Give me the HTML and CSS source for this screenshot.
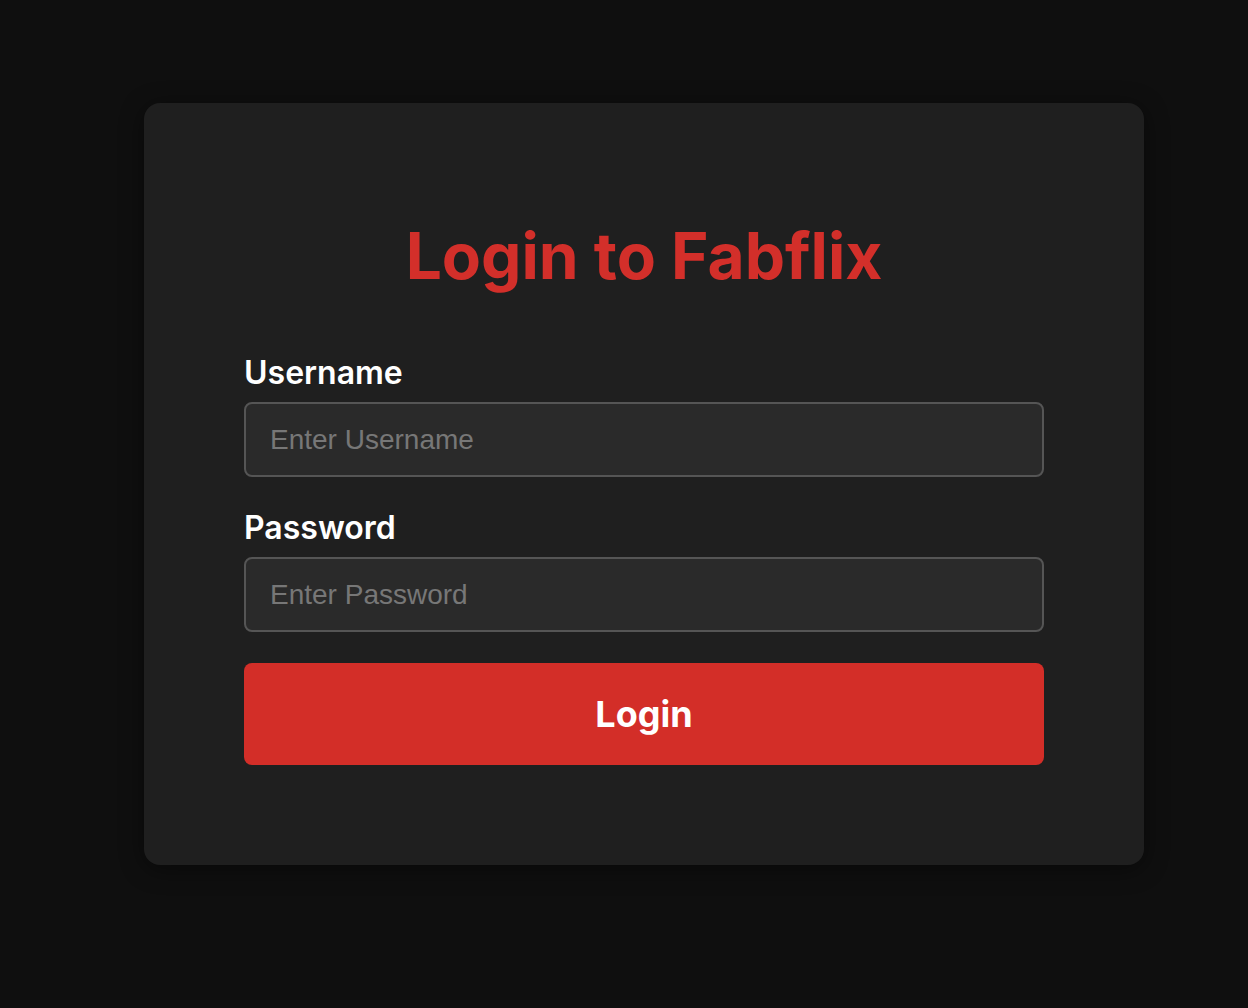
FILE: index.html
```html
<!DOCTYPE html>
<html>
<head>
<meta charset="utf-8">
<title>Login to Fabflix</title>
<link rel="stylesheet" href="styles.css">
</head>
<body>
<main class="page">
  <div class="card">
    <h1 class="title">Login to Fabflix</h1>
    <form class="form">
      <div class="field">
        <label class="label" for="username">Username</label>
        <input class="input" id="username" type="text" placeholder="Enter Username">
      </div>
      <div class="field">
        <label class="label" for="password">Password</label>
        <input class="input" id="password" type="password" placeholder="Enter Password">
      </div>
      <button class="button" type="button">Login</button>
    </form>
  </div>
</main>
</body>
</html>
```
FILE: styles.css
```css
html, body {
  margin: 0;
  padding: 0;
  background: #0f0f0f;
  height: 100%;
}
body {
  font-family: Inter, "Liberation Sans", sans-serif;
}
.page {
  display: flex;
  justify-content: center;
  padding: 103px 0 0 40px;
}
.card {
  width: 1000px;
  box-sizing: border-box;
  padding: 100px;
  background: #1f1f1f;
  border-radius: 16px;
  box-shadow: 0 4px 24px rgba(0, 0, 0, 0.45);
}
.title {
  margin: 14px 0 0;
  text-align: center;
  color: #d32f2a;
  font-size: 64px;
  font-weight: 700;
  line-height: 77px;
}
.form {
  display: flex;
  flex-direction: column;
  margin-top: 63px;
}
.field {
  display: flex;
  flex-direction: column;
}
.field + .field {
  margin-top: 35px;
}
.label {
  color: #ffffff;
  font-size: 32px;
  font-weight: 600;
  line-height: 32px;
  margin-bottom: 13px;
}
.input {
  box-sizing: border-box;
  height: 75px;
  width: 100%;
  padding: 0 24px;
  background: #2a2a2a;
  border: 2px solid #555555;
  border-radius: 8px;
  color: #ffffff;
  font-family: "Liberation Sans", Arial, sans-serif;
  font-size: 28px;
  outline: none;
}
.input::placeholder {
  color: #777777;
}
.button {
  margin-top: 31px;
  height: 102px;
  width: 100%;
  border: none;
  border-radius: 8px;
  background: #d32e28;
  color: #ffffff;
  font-family: Inter, "Liberation Sans", sans-serif;
  font-size: 36px;
  font-weight: 700;
  cursor: pointer;
}
```
